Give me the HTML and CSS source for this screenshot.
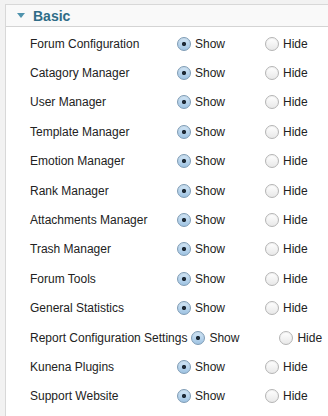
FILE: index.html
```html
<!DOCTYPE html>
<html lang="en">
<head>
    <meta charset="UTF-8">
    <title>Basic</title>
    <link rel="stylesheet" href="styles.css">
</head>
<body>
    <div class="panel">
        <div class="panel-header">
            <span class="arrow"></span>
            <span class="title">Basic</span>
        </div>
        <div class="panel-body">
            <div class="row">
                <span class="label">Forum Configuration</span>
                <label class="opt"><input type="radio" name="r1" checked> Show</label>
                <label class="opt"><input type="radio" name="r1"> Hide</label>
            </div>
            <div class="row">
                <span class="label">Catagory Manager</span>
                <label class="opt"><input type="radio" name="r2" checked> Show</label>
                <label class="opt"><input type="radio" name="r2"> Hide</label>
            </div>
            <div class="row">
                <span class="label">User Manager</span>
                <label class="opt"><input type="radio" name="r3" checked> Show</label>
                <label class="opt"><input type="radio" name="r3"> Hide</label>
            </div>
            <div class="row">
                <span class="label">Template Manager</span>
                <label class="opt"><input type="radio" name="r4" checked> Show</label>
                <label class="opt"><input type="radio" name="r4"> Hide</label>
            </div>
            <div class="row">
                <span class="label">Emotion Manager</span>
                <label class="opt"><input type="radio" name="r5" checked> Show</label>
                <label class="opt"><input type="radio" name="r5"> Hide</label>
            </div>
            <div class="row">
                <span class="label">Rank Manager</span>
                <label class="opt"><input type="radio" name="r6" checked> Show</label>
                <label class="opt"><input type="radio" name="r6"> Hide</label>
            </div>
            <div class="row">
                <span class="label">Attachments Manager</span>
                <label class="opt"><input type="radio" name="r7" checked> Show</label>
                <label class="opt"><input type="radio" name="r7"> Hide</label>
            </div>
            <div class="row">
                <span class="label">Trash Manager</span>
                <label class="opt"><input type="radio" name="r8" checked> Show</label>
                <label class="opt"><input type="radio" name="r8"> Hide</label>
            </div>
            <div class="row">
                <span class="label">Forum Tools</span>
                <label class="opt"><input type="radio" name="r9" checked> Show</label>
                <label class="opt"><input type="radio" name="r9"> Hide</label>
            </div>
            <div class="row">
                <span class="label">General Statistics</span>
                <label class="opt"><input type="radio" name="r10" checked> Show</label>
                <label class="opt"><input type="radio" name="r10"> Hide</label>
            </div>
            <div class="row">
                <span class="label">Report Configuration Settings</span>
                <label class="opt"><input type="radio" name="r11" checked> Show</label>
                <label class="opt"><input type="radio" name="r11"> Hide</label>
            </div>
            <div class="row">
                <span class="label">Kunena Plugins</span>
                <label class="opt"><input type="radio" name="r12" checked> Show</label>
                <label class="opt"><input type="radio" name="r12"> Hide</label>
            </div>
            <div class="row">
                <span class="label">Support Website</span>
                <label class="opt"><input type="radio" name="r13" checked> Show</label>
                <label class="opt"><input type="radio" name="r13"> Hide</label>
            </div>
        </div>
    </div>
</body>
</html>
```

FILE: styles.css
```css
body {
    margin: 0;
    padding: 4px 0 0 5px;
    background-color: #f2f2f2;
    font-family: "Liberation Sans", Arial, sans-serif;
    font-size: 12px;
    color: #222;
    overflow: hidden;
}
.panel {
    background: white;
    border-top: 1px solid #d8d8d8;
    border-left: 1px solid #d8d8d8;
    height: 420px;
}
.panel-header {
    display: flex;
    align-items: center;
    height: 21px;
    padding-left: 11px;
    background-color: #f9f9f9;
    border-bottom: 1px solid #d4d4d4;
}
.arrow {
    width: 0;
    height: 0;
    border-left: 4px solid transparent;
    border-right: 4px solid transparent;
    border-top: 5px solid #4f93ad;
    margin-right: 8px;
}
.title {
    font-weight: bold;
    font-size: 14px;
    color: #2f6c87;
}
.panel-body {
    padding: 2px 0 0 24px;
}
.row {
    display: flex;
    align-items: center;
    height: 29.4px;
    white-space: nowrap;
}
.label {
    flex-shrink: 0;
    min-width: 143px;
    margin-right: 4px;
}
.opt {
    flex-shrink: 0;
    display: flex;
    align-items: center;
    width: 88px;
}
.opt:last-child {
    width: auto;
}
.opt input {
    appearance: none;
    -webkit-appearance: none;
    box-sizing: border-box;
    width: 14px;
    height: 14px;
    margin: 0 4px 0 0;
    border: 1px solid #b4b4b4;
    border-radius: 50%;
    background: linear-gradient(#ffffff, #e8e8e8);
    box-shadow: inset 0 1px 1px rgba(0, 0, 0, 0.06);
}
.opt input:checked {
    border-color: #7d9bb5;
    background: radial-gradient(circle, #1e2a36 0, #1e2a36 1.8px, transparent 2.4px),
        linear-gradient(#d2e6f6, #9fc3e2);
}
```
